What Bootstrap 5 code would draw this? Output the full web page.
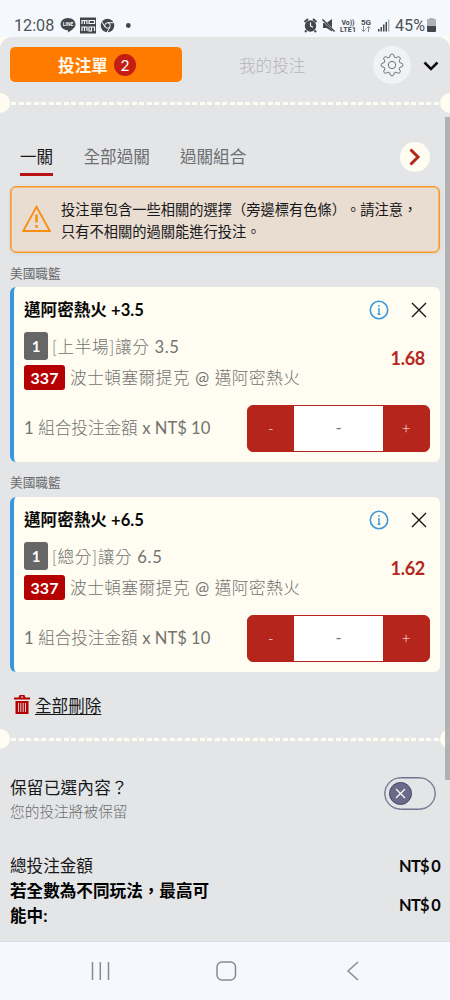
<!DOCTYPE html>
<html lang="zh-Hant">
<head>
<meta charset="utf-8">
<meta name="viewport" content="width=device-width, initial-scale=1">
<title>投注單</title>
<link href="https://cdn.jsdelivr.net/npm/bootstrap@5.3.0/dist/css/bootstrap.min.css" rel="stylesheet">
<style>
body{font-family:Lato,"Noto Sans CJK TC",sans-serif;font-size:16.6px;line-height:25px;color:#17181a;background:#e4e5e7;height:1000px;overflow:hidden;white-space:nowrap;text-spacing-trim:space-all}
svg{display:block;flex:none}
.statusbar{height:37px;background:#f5f9fe;padding:15px 13px 0 14px;font-family:Roboto,sans-serif;color:#505356;font-size:16.2px;line-height:22px}
.slip-shell{background:#fffdf2;height:65px}
.slip-head{background:#e4e5e7;border-radius:12px 12px 0 0;height:65px;padding:10px 10px 0}
.slip-tab{width:172px;height:35px;border-radius:5px;background:#ff7b00;color:#fff8ea;font-weight:700;border:0;padding:0 0 0 2px;gap:6px}
.slip-tab .slip-name{padding-top:3px}
.count-dot{width:22px;height:22px;border-radius:50%;background:#c31d14;font-size:15.5px;line-height:22px;font-weight:400;color:#fff;text-align:center}
.my-bets{color:#b4b5b7;font-weight:300;width:66px;margin-left:57px;padding-top:2px}
.gear-wrap{width:38px;height:38px;border-radius:50%;background:#f0f2f5;margin:-1px 12px 0 68px}
.perforation{height:20px;position:relative;overflow:hidden}
.perforation::before,.perforation::after{content:"";position:absolute;width:20px;height:20px;border-radius:50%;background:#fffdf2;top:0;left:-10px}
.perforation::after{left:auto;right:-10px}
.stitch{height:3px;margin:0 5px 0 11px;background:repeating-linear-gradient(90deg,#fffdf2 0 5px,transparent 5px 7.55px)}
.combo-tabs{height:73px;padding:31px 20px 0}
.combo-tab{color:#6b6d70;height:32px;padding-top:1px}
.combo-tab.active{color:#17181a;border-bottom:3.5px solid #b81212}
.next-btn{width:30px;height:30px;border-radius:50%;background:#fffdf2;margin-top:-2px}
.notice{margin:0 10px;height:67px;border:1px solid #f89a28;border-radius:6px;background:#e9dcd0;font-size:14.25px;line-height:21.6px;padding:0 10px 0 11px;box-shadow:inset 0 0 0 .6px #f89a28,0 1px 4px #0001}
.league{height:35px;padding:10px 10px 0;font-size:12.7px;line-height:20px;color:#68696c}
.league-first{height:34px}
.pick{margin:0 10px;height:175px;background:#fffdf2;border-left:4px solid #3998db;border-radius:6px;padding:10px 10px 0 10px;position:relative}
.pick-title{font-weight:700;color:#080808;line-height:27px;height:35px}
.muted-line{color:#727270;font-weight:300}
.lat{font-weight:400}
.tag{border-radius:3px;color:#fff;font-size:15px;font-weight:700;text-align:center}
.tag-leg{width:24px;height:28px;line-height:29px;background:#666;margin-right:4px}
.tag-id{width:41px;height:25px;line-height:25px;background:#b40000;margin-right:5px;font-size:16px;letter-spacing:0}
.leg-row{height:28px}
.match-row{height:25px;margin-top:5px}
.match-name{letter-spacing:.56px;padding-top:2px}
.leg-name{letter-spacing:.65px;padding-top:2px}
.odds{position:absolute;right:15px;top:59px;color:#b5271d;font-weight:700;font-size:18px;letter-spacing:-.3px}
.stake-row{margin-top:15px;height:47px}
.stepper{width:183px;height:47px;border:1px solid #b5251b;border-radius:6px;overflow:hidden;background:#b5251b}
.step{width:46px;color:#fff1e9;font-weight:300;font-size:15px}
.step-value{background:#fff;height:45px;width:90px;color:#777;text-align:center;line-height:44px;font-weight:400}
.clear-row{height:57px;padding:22px 14px 0}
.clear-link{color:#17181a;text-decoration:underline;text-underline-offset:2px;text-decoration-thickness:1.3px}
.keep-row{height:105px;padding:26px 14px 0 10px}
.keep-title{letter-spacing:.25px;padding-top:1px}
.keep-note{font-size:14.7px;color:#6b6d70;line-height:21px;font-weight:300}
.switch-off{width:52px;height:33px;border:1px solid #74738f;box-shadow:inset 0 0 0 .5px #74738f;border-radius:17px;padding-left:4px;margin-top:2px}
.knob{width:23px;height:23px;border-radius:50%;background:#6b6a88;border:1px solid #45436a}
.totals{height:87px;padding:0 10px}
.money{font-size:16.4px;font-weight:700;color:#080808;letter-spacing:-.75px;word-spacing:-.8px;line-height:23px}
.phone-nav{height:59px;background:#f5f9fe;border-top:1px solid #dcdee5}
.scroll-thumb{position:absolute;right:0;top:117px;width:5px;height:663px;background:#a9aaab;opacity:.88}
</style>
</head>
<body>
<svg width="0" height="0" class="position-absolute"><defs>
<symbol id="info" viewBox="0 0 20 20"><circle cx="10" cy="10" r="8.7" fill="none" stroke="#3998db" stroke-width="1.6"/><path d="M10 5v1.800M8.900 9H10v5M8.600 14.200h2.800" fill="none" stroke="#3998db" stroke-width="1.400"/></symbol>
<symbol id="close" viewBox="0 0 16 16"><path d="M1 1l14 14M15 1L1 15" stroke="#151515" stroke-width="1.4" fill="none"/></symbol>
</defs></svg>

<header class="statusbar d-flex align-items-start">
  <span style="width:46px">12:08</span>
  <svg width="74" height="20" viewBox="0 0 74 20" fill="#44474a">
    <path d="M8 3c4.200 0 7.500 2.800 7.500 6.300 0 3.400-3 5.400-7.500 8.200l.2-2.100C4 15.200.6 12.600.6 9.200.6 5.800 3.800 3 8 3z"/>
    <text x="8" y="11.300" font-size="5" font-weight="700" text-anchor="middle" fill="#f5f9fe">LINE</text>
    <path d="M20 2.500h16v16H20z"/>
    <path d="M22 9V5.500h5V9m-2.500-3.500V9M29 5.500h5.500v3H29zM22 16v-4h5v4m-2.500-4v4M29 12h2.500v4H29zm2.500 0h3v4" fill="none" stroke="#f5f9fe" stroke-width="1.200"/>
    <circle cx="47.500" cy="10.500" r="6.800"/><circle cx="47.500" cy="10.500" r="2.700" fill="none" stroke="#f5f9fe"/><path d="M47.500 7.700h6M45 12l-3-5.200M50 12l-3 5.300" stroke="#f5f9fe"/>
    <circle cx="68.300" cy="10.500" r="2.400"/>
  </svg>
  <svg class="ms-auto" width="92" height="20" viewBox="0 0 92 20" fill="#44474a" stroke="none">
    <circle cx="7.500" cy="11" r="5.700"/><path d="M1.500 7l3.500-3M10 4l3.500 3M3.500 15.500L2 17M11.500 15.500L13 17" stroke="#44474a" stroke-width="2"/><path d="M7.500 7.500V11l2.500 1.300" fill="none" stroke="#f5f9fe" stroke-width="1.200"/>
    <path d="M20 8h3.500l5.500-4v12.500L23.500 13H20z"/><path d="M19 4.500l13 12" stroke="#f5f9fe" stroke-width="2"/><path d="M19.500 4.500l12 12" stroke="#44474a" stroke-width="1.600"/>
    <text x="38.500" y="9.500" font-size="7" font-weight="700" textLength="13">Vo))</text><text x="37" y="17" font-size="7" font-weight="700" textLength="16">LTE1</text>
    <text x="58" y="10" font-size="8" font-weight="700" textLength="10">5G</text><path d="M60.500 11v5.500M58.500 14.500l2 2 2-2M65.500 17v-5.500M63.500 13.500l2-2 2 2" fill="none" stroke="#8a8d90"/>
    <path d="M75 14h1.500v2.500H75zM77.500 12H79v4.500h-1.500zM80 9.500h1.500v7H80zM82.500 7H84v9.500h-1.500z"/><path d="M85 4.500h1.300v12H85z" fill="#a7aaad"/>
  </svg>
  <span style="width:31px">45%</span>
  <svg width="11" height="20" viewBox="0 0 11 20"><path d="M3.500 4V3h4v1H9q1 0 1 1v6H1V5q0-1 1-1z" fill="#b0b2b5"/><path d="M1 11h9v5q0 1-1 1H2q-1 0-1-1z" fill="#44474a"/></svg>
</header>

<div class="slip-shell"><nav class="slip-head d-flex align-items-start">
  <button class="slip-tab d-flex align-items-center justify-content-center"><span class="slip-name">投注單</span><span class="count-dot">2</span></button>
  <div class="d-flex align-items-center">
    <span class="my-bets">我的投注</span>
    <span class="gear-wrap d-flex align-items-center justify-content-center"><svg width="24" height="24" viewBox="0 0 24 24" fill="none" stroke="#707275" stroke-width="1" stroke-linejoin="round"><path d="M9.700 4.200Q9.900 1 12 1t2.300 3.200l1.700.7q2.400-2.200 3.800-.7t-.7 3.800l.7 1.700Q23 9.900 23 12t-3.200 2.300l-.7 1.700q2.200 2.400.7 3.800t-3.800-.7l-1.700.7Q14.100 23 12 23t-2.300-3.200L8 19.100q-2.400 2.200-3.800.7T4.900 16l-.7-1.700Q1 14.100 1 12t3.200-2.300L4.900 8Q2.700 5.600 4.200 4.200T8 4.900z"/><circle cx="12" cy="12" r="3.700"/></svg></span>
    <svg width="16" height="10" viewBox="0 0 16 10"><path d="M1.500 1.500L8 8l6.500-6.500" fill="none" stroke="#0c0c0c" stroke-width="2.500"/></svg>
  </div>
</nav></div>

<div class="perforation" style="margin-top:-9px;padding-top:9px"><div class="stitch"></div></div>

<div class="combo-tabs d-flex align-items-start">
  <div class="combo-tab active" style="width:33px">一關</div>
  <div class="combo-tab" style="margin-left:30.500px">全部過關</div>
  <div class="combo-tab" style="margin-left:30px">過關組合</div>
  <div class="next-btn ms-auto d-flex align-items-center justify-content-center"><svg width="12" height="18" viewBox="0 0 12 18"><path d="M1.500 1.500L9 9l-7.500 7.500" fill="none" stroke="#b5271d" stroke-width="3"/></svg></div>
</div>

<div class="notice d-flex align-items-center">
  <svg width="29" height="27" viewBox="0 0 29 27" fill="none" stroke="#f98e12" style="margin-bottom:3px"><path d="M14.500 1.800L27.800 26H1.200z" stroke-width="1.800"/><path d="M14.500 9.500v8M14.500 20v2.700" stroke-width="2.500"/></svg>
  <div style="margin-left:10px;padding-top:2px">投注單包含一些相關的選擇（旁邊標有色條）。請注意，<br>只有不相關的過關能進行投注。</div>
</div>

<div class="league league-first">美國職籃</div>
<section class="pick">
  <div class="pick-title d-flex align-items-start"><span>邁阿密熱火 +3.5</span><svg class="ms-auto" width="20" height="20" style="margin:3px 22px 0 0"><use href="#info"/></svg><svg width="16" height="16" style="margin:5px 3px 0 0"><use href="#close"/></svg></div>
  <div class="leg-row muted-line d-flex align-items-center"><span class="tag tag-leg">1</span><span class="leg-name">[上半場]讓分 <span class="lat">3.5</span></span></div>
  <div class="match-row muted-line d-flex align-items-center"><span class="tag tag-id">337</span><span class="match-name">波士頓塞爾提克 <span class="lat">@</span> 邁阿密熱火</span></div>
  <span class="odds">1.68</span>
  <div class="stake-row muted-line d-flex align-items-center justify-content-between"><span><span class="lat">1</span> 組合投注金額 <span class="lat">x NT$ 10</span></span>
    <div class="stepper d-flex align-items-center"><div class="step text-center">-</div><div class="step-value">-</div><div class="step text-center">+</div></div></div>
</section>

<div class="league">美國職籃</div>
<section class="pick">
  <div class="pick-title d-flex align-items-start"><span>邁阿密熱火 +6.5</span><svg class="ms-auto" width="20" height="20" style="margin:3px 22px 0 0"><use href="#info"/></svg><svg width="16" height="16" style="margin:5px 3px 0 0"><use href="#close"/></svg></div>
  <div class="leg-row muted-line d-flex align-items-center"><span class="tag tag-leg">1</span><span class="leg-name">[總分]讓分 <span class="lat">6.5</span></span></div>
  <div class="match-row muted-line d-flex align-items-center"><span class="tag tag-id">337</span><span class="match-name">波士頓塞爾提克 <span class="lat">@</span> 邁阿密熱火</span></div>
  <span class="odds">1.62</span>
  <div class="stake-row muted-line d-flex align-items-center justify-content-between"><span><span class="lat">1</span> 組合投注金額 <span class="lat">x NT$ 10</span></span>
    <div class="stepper d-flex align-items-center"><div class="step text-center">-</div><div class="step-value">-</div><div class="step text-center">+</div></div></div>
</section>

<div class="clear-row d-flex align-items-start">
  <svg width="16" height="20" viewBox="0 0 16 20" style="margin-right:5px"><path d="M0 3.500h4.500L5.500 1h5l1 2.500H16v2H0zM7 2.500l-.5 1h3L9 2.500zM1.500 7h13v13h-13z" fill="#b40000" fill-rule="evenodd"/><path d="M4.500 9v9M6.800 9v9M9.200 9v9M11.500 9v9" stroke="#e4e5e7" stroke-width=".9"/></svg>
  <span class="clear-link">全部刪除</span>
</div>

<div class="perforation" style="padding-top:9px"><div class="stitch"></div></div>

<div class="keep-row d-flex align-items-start">
  <div><div class="keep-title">保留已選內容？</div><div class="keep-note">您的投注將被保留</div></div>
  <div class="switch-off ms-auto d-flex align-items-center"><span class="knob d-flex align-items-center justify-content-center"><svg width="11" height="11" viewBox="0 0 11 11"><path d="M1 1l9 9M10 1l-9 9" stroke="#fff" stroke-width="1.200"/></svg></span></div>
</div>

<div class="totals">
  <div class="d-flex justify-content-between"><span>總投注金額</span><span class="money">NT$ 0</span></div>
  <div class="d-flex justify-content-between align-items-center fw-bold text-black"><span>若全數為不同玩法，最高可<br>能中:</span><span class="money">NT$ 0</span></div>
</div>

<footer class="phone-nav d-flex justify-content-center align-items-center">
  <svg width="270" height="20" viewBox="0 0 270 20" fill="none" stroke="#898b8f" stroke-width="1.500"><path d="M2.500 1v18M10.300 1v18M18.500 1v18"/><rect x="127" y="1" width="18.500" height="18" rx="5"/><path d="M268 1l-10 9 10 9"/></svg>
</footer>
<div class="scroll-thumb"></div>
</body>
</html>
